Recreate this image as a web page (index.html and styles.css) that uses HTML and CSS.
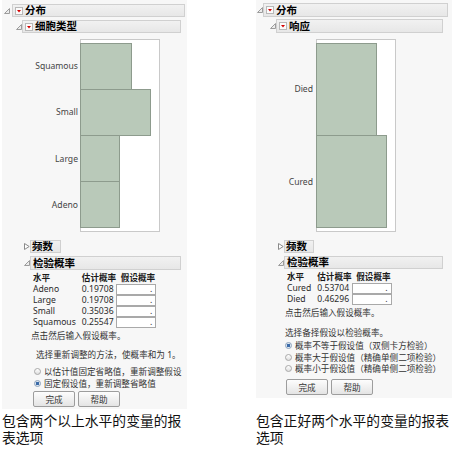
FILE: index.html
```html
<!DOCTYPE html>
<html lang="zh-CN">
<head>
<meta charset="utf-8">
<title>报表选项</title>
<link rel="stylesheet" href="styles.css">
</head>
<body>
<div class="page">
  <div class="panel p-left">
    <div class="row r1">
      <svg class="disc" viewBox="0 0 6 6"><polygon points="5.5,0.5 5.5,5.5 0.5,5.5"/></svg>
      <div class="hdr"><span class="rbtn"><svg viewBox="0 0 6 6"><polygon points="1,2 5,2 3,4.5"/></svg></span>分布</div>
    </div>
    <div class="row r2">
      <svg class="disc" viewBox="0 0 6 6"><polygon points="5.5,0.5 5.5,5.5 0.5,5.5"/></svg>
      <div class="hdr"><span class="rbtn"><svg viewBox="0 0 6 6"><polygon points="1,2 5,2 3,4.5"/></svg></span>细胞类型</div>
    </div>
    <div class="chart">
      <div class="labels">
        <span>Squamous</span><span>Small</span><span>Large</span><span>Adeno</span>
      </div>
      <div class="frame">
        <div class="bar" style="width:52px"></div>
        <div class="bar" style="width:71px"></div>
        <div class="bar" style="width:40px"></div>
        <div class="bar" style="width:40px"></div>
      </div>
    </div>
    <div class="row r3">
      <svg class="disc closed" viewBox="0 0 6 7"><polygon points="0.5,0.5 5.2,3.5 0.5,6.5"/></svg>
      <div class="hdr small">频数</div>
    </div>
    <div class="row r4">
      <svg class="disc" viewBox="0 0 6 6"><polygon points="5.5,0.5 5.5,5.5 0.5,5.5"/></svg>
      <div class="hdr">检验概率</div>
    </div>
    <div class="tbl">
      <span class="th c1">水平</span><span class="th">估计概率</span><span class="th c3">假设概率</span>
      <span class="c1">Adeno</span><span>0.19708</span><span class="inp">.</span>
      <span class="c1">Large</span><span>0.19708</span><span class="inp">.</span>
      <span class="c1">Small</span><span>0.35036</span><span class="inp">.</span>
      <span class="c1">Squamous</span><span>0.25547</span><span class="inp">.</span>
    </div>
    <p class="note">点击然后输入假设概率。</p>
    <p class="prompt">选择重新调整的方法，使概率和为 1。</p>
    <div class="opts">
      <div class="opt"><span class="radio"></span>以估计值固定省略值，重新调整假设</div>
      <div class="opt"><span class="radio on"></span>固定假设值，重新调整省略值</div>
    </div>
    <div class="btns"><span class="btn">完成</span><span class="btn">帮助</span></div>
  </div>

  <div class="panel p-right">
    <div class="row r1">
      <svg class="disc" viewBox="0 0 6 6"><polygon points="5.5,0.5 5.5,5.5 0.5,5.5"/></svg>
      <div class="hdr"><span class="rbtn"><svg viewBox="0 0 6 6"><polygon points="1,2 5,2 3,4.5"/></svg></span>分布</div>
    </div>
    <div class="row r2">
      <svg class="disc" viewBox="0 0 6 6"><polygon points="5.5,0.5 5.5,5.5 0.5,5.5"/></svg>
      <div class="hdr"><span class="rbtn"><svg viewBox="0 0 6 6"><polygon points="1,2 5,2 3,4.5"/></svg></span>响应</div>
    </div>
    <div class="chart">
      <div class="labels">
        <span>Died</span><span>Cured</span>
      </div>
      <div class="frame">
        <div class="bar" style="width:61px"></div>
        <div class="bar" style="width:71px"></div>
      </div>
    </div>
    <div class="row r3">
      <svg class="disc closed" viewBox="0 0 6 7"><polygon points="0.5,0.5 5.2,3.5 0.5,6.5"/></svg>
      <div class="hdr small">频数</div>
    </div>
    <div class="row r4">
      <svg class="disc" viewBox="0 0 6 6"><polygon points="5.5,0.5 5.5,5.5 0.5,5.5"/></svg>
      <div class="hdr">检验概率</div>
    </div>
    <div class="tbl">
      <span class="th c1">水平</span><span class="th">估计概率</span><span class="th c3">假设概率</span>
      <span class="c1">Cured</span><span>0.53704</span><span class="inp">.</span>
      <span class="c1">Died</span><span>0.46296</span><span class="inp">.</span>
    </div>
    <p class="note">点击然后输入假设概率。</p>
    <p class="prompt">选择备择假设以检验概率。</p>
    <div class="opts">
      <div class="opt"><span class="radio on"></span>概率不等于假设值（双侧卡方检验）</div>
      <div class="opt"><span class="radio"></span>概率大于假设值（精确单侧二项检验）</div>
      <div class="opt"><span class="radio"></span>概率小于假设值（精确单侧二项检验）</div>
    </div>
    <div class="btns"><span class="btn">完成</span><span class="btn">帮助</span></div>
  </div>

  <p class="cap">包含两个以上水平的变量的报表选项</p>
  <p class="cap">包含正好两个水平的变量的报表选项</p>
</div>
</body>
</html>
```

FILE: styles.css
```css
* {
  box-sizing: border-box;
  margin: 0;
  padding: 0;
}

html, body {
  background: #fff;
}

body {
  font-family: "Noto Sans", "Noto Sans CJK SC", sans-serif;
  font-size: 8.6px;
  color: #333;
}

.page {
  display: grid;
  grid-template-columns: 185px 196px;
  column-gap: 69px;
  padding-left: 2px;
  align-items: start;
}

.panel {
  background: #f7f7f7;
  display: flex;
  flex-direction: column;
  align-items: flex-start;
}

.p-left { padding: 4px 0 2px; }
.p-right { padding: 3px 0 3px; }

/* outline rows */
.row {
  display: flex;
  align-items: center;
  align-self: stretch;
}

.disc {
  width: 6px;
  height: 6px;
  flex: none;
  fill: #ececec;
  stroke: #9c9c9c;
  stroke-width: 1;
}

.disc.closed {
  height: 7px;
  fill: #fff;
  stroke: #8a8a8a;
}

.hdr {
  flex: 1;
  display: flex;
  align-items: center;
  height: 13px;
  border: 1px solid #d0d0d0;
  background: linear-gradient(#f1f1f1, #e7e7e7);
  font-size: 10.5px;
  font-weight: bold;
  color: #000;
  line-height: 11px;
  padding-left: 2px;
  white-space: nowrap;
}

.hdr.small {
  flex: none;
  padding-left: 1px;
}

.rbtn {
  width: 8px;
  height: 8px;
  flex: none;
  border: 1px solid #b8b8b8;
  background: #fbfbfb;
  margin-right: 2px;
  display: flex;
}

.rbtn svg {
  width: 6px;
  height: 6px;
  fill: #d40000;
}

.p-left .r1 { padding-left: 2px; gap: 2px; }
.p-left .r1 .hdr { margin-right: 2px; }
.p-right .r1 { padding-left: 1px; }
.p-right .r1 .hdr { margin-right: 4px; height: 14px; }

.r2 { padding-left: 14px; }
.p-left .r2 { margin-top: 3px; }
.p-right .r2 { margin-top: 2px; }
.p-right .r2 .hdr { height: 14px; }

.r3 { margin-top: 8px; padding-left: 22px; }
.p-left .r3 .hdr { width: 31px; }
.p-right .r3 .hdr { width: 30px; }

.r4 { margin-top: 3px; padding-left: 22px; }
.p-left .r4 .hdr { height: 14px; }

.p-left .r2 .hdr, .p-left .r4 .hdr { margin-right: 6px; }
.p-right .r2 .hdr, .p-right .r4 .hdr { margin-right: 9px; }

/* chart */
.chart {
  display: flex;
  margin-top: 6px;
}

.labels {
  display: flex;
  flex-direction: column;
  padding-top: 4px;
}

.labels span {
  display: flex;
  align-items: center;
  justify-content: flex-end;
  color: #444;
}

.p-left .labels { width: 76px; margin-right: 2px; }
.p-left .labels span { height: 46.25px; }
.p-right .labels { width: 57px; margin-right: 3px; }
.p-right .labels span { height: 92.5px; }

.frame {
  width: 80px;
  height: 193px;
  border: 1px solid #c9c9c9;
  background: #fff;
  padding: 3px 0;
  display: flex;
  flex-direction: column;
}

.bar {
  flex: 1;
  margin-left: -1px;
  background: #b9c9b9;
  border: 1px solid #8d9b8d;
}

.bar + .bar { margin-top: -1px; }

/* table */
.tbl {
  display: grid;
  grid-template-columns: auto auto 40px;
  grid-auto-rows: 11px;
  align-items: center;
  margin: 3px 0 0 31px;
  line-height: 11px;
  color: #2a2a2a;
}

.tbl .th {
  font-weight: bold;
  color: #1a1a1a;
}

.tbl .c1 { padding-right: 6px; }
.tbl .c3 { text-align: right; padding-right: 1px; }

.inp {
  height: 11px;
  border: 1px solid #a9a9a9;
  background: #fff;
  text-align: right;
  padding-right: 3px;
  line-height: 8px;
}

.note {
  margin: 3px 0 0 29px;
  line-height: 10px;
}

.prompt {
  line-height: 10px;
}

.p-left .prompt { margin: 9px 0 0 34px; }
.p-right .prompt { margin: 10px 0 0 29px; }

.opt {
  display: flex;
  align-items: center;
  height: 12px;
  white-space: nowrap;
}

.p-left .opts { margin: 5px 0 0 32px; }
.p-right .opts { margin: 2px 0 0 29px; }
.p-right .opt { height: 11.5px; }

.radio {
  width: 7px;
  height: 7px;
  flex: none;
  border-radius: 50%;
  border: 1px solid #a8a8a8;
  background: linear-gradient(#ffffff, #dedede);
  margin-right: 3px;
}

.radio.on {
  border-color: #8ea3bb;
  background: radial-gradient(circle, #3a6aa8 0, #3a6aa8 1.4px, #dde6f0 2px);
}

.btns {
  display: flex;
  gap: 3px;
}

.p-left .btns { margin: 2px 0 0 31px; }
.p-right .btns { margin: 4.5px 0 0 30px; }

.btn {
  width: 42px;
  height: 16px;
  border: 1px solid #9d9d9d;
  border-radius: 2px;
  background: linear-gradient(#fdfdfd, #e4e4e4);
  display: flex;
  align-items: center;
  justify-content: center;
  color: #333;
}

.cap {
  margin-top: 2.5px;
  font-family: "Noto Sans CJK SC", sans-serif;
  font-size: 13.8px;
  line-height: 17px;
  color: #111;
}
```
